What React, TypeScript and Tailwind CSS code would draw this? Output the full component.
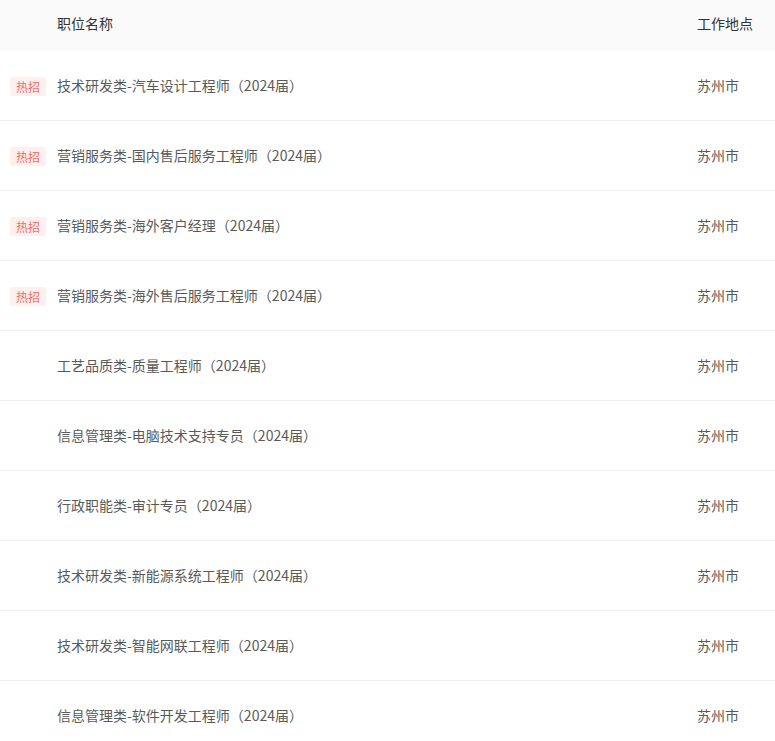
import React from "react";

const rows: { title: string; hot: boolean }[] = [
  { title: "技术研发类-汽车设计工程师（2024届）", hot: true },
  { title: "营销服务类-国内售后服务工程师（2024届）", hot: true },
  { title: "营销服务类-海外客户经理（2024届）", hot: true },
  { title: "营销服务类-海外售后服务工程师（2024届）", hot: true },
  { title: "工艺品质类-质量工程师（2024届）", hot: false },
  { title: "信息管理类-电脑技术支持专员（2024届）", hot: false },
  { title: "行政职能类-审计专员（2024届）", hot: false },
  { title: "技术研发类-新能源系统工程师（2024届）", hot: false },
  { title: "技术研发类-智能网联工程师（2024届）", hot: false },
  { title: "信息管理类-软件开发工程师（2024届）", hot: false },
];

export default function App() {
  return (
    <div
      className="w-[775px] bg-white text-[14px]"
      style={{ fontFamily: '"Noto Sans CJK SC", "Noto Sans", sans-serif' }}
    >
      <div className="flex h-[51px] items-center bg-[#fafafa] pb-[5px] text-[#333]">
        <div className="w-[57px] shrink-0" />
        <div className="flex-1">职位名称</div>
        <div className="w-[78px] shrink-0">工作地点</div>
      </div>
      {rows.map((r, i) => (
        <div
          key={i}
          className="flex h-[70px] items-center border-b border-[#f0f0f0] text-[#5a5a5a]"
        >
          <div className="flex w-[57px] shrink-0 items-center pl-[10px] pt-[2px]">
            {r.hot && (
              <span className="flex h-[19px] w-[36px] items-center justify-center rounded-[2px] bg-[#fff0f0] text-[12px] leading-none text-[#f56c6c]">
                热招
              </span>
            )}
          </div>
          <div className="flex-1">{r.title}</div>
          <div className="w-[78px] shrink-0">苏州市</div>
        </div>
      ))}
    </div>
  );
}
